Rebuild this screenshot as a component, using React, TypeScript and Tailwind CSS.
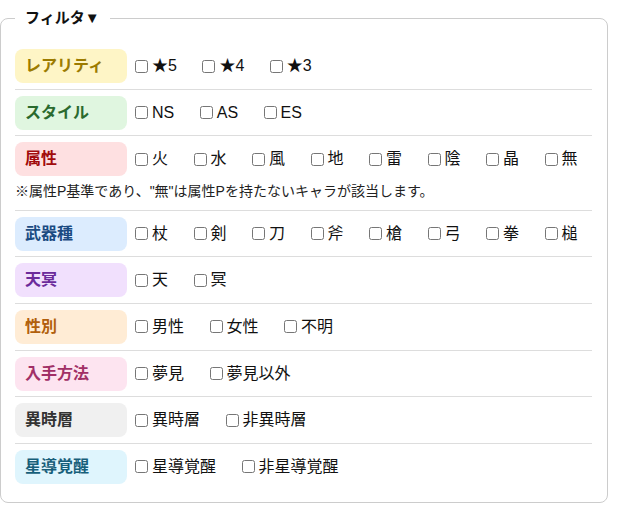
import React from 'react'

type Group = {
  title: string
  label: string
  options: string[]
  note?: string
}

const groups: Group[] = [
  { title: 'レアリティ', label: 'bg-[#fef5c6] text-[#9c7b00]', options: ['★5', '★4', '★3'] },
  { title: 'スタイル', label: 'bg-[#e0f6e0] text-[#2a6a2e]', options: ['NS', 'AS', 'ES'] },
  {
    title: '属性',
    label: 'bg-[#fee0e1] text-[#a10c0c]',
    options: ['火', '水', '風', '地', '雷', '陰', '晶', '無'],
    note: '※属性P基準であり、"無"は属性Pを持たないキャラが該当します。',
  },
  { title: '武器種', label: 'bg-[#dcecfe] text-[#1b4b82]', options: ['杖', '剣', '刀', '斧', '槍', '弓', '拳', '槌'] },
  { title: '天冥', label: 'bg-[#f1e0fd] text-[#6b2b9b]', options: ['天', '冥'] },
  { title: '性別', label: 'bg-[#ffecd5] text-[#b15f0c]', options: ['男性', '女性', '不明'] },
  { title: '入手方法', label: 'bg-[#fde4f0] text-[#a12f66]', options: ['夢見', '夢見以外'] },
  { title: '異時層', label: 'bg-[#f0f0f0] text-[#333333]', options: ['異時層', '非異時層'] },
  { title: '星導覚醒', label: 'bg-[#dff5fd] text-[#175f7a]', options: ['星導覚醒', '非星導覚醒'] },
]

function FilterRow({ group, last }: { group: Group; last: boolean }) {
  return (
    <div className={`pt-[6px] pb-[5.6px] ${last ? '' : 'border-b border-[#dddddd]'}`}>
      <div className="flex items-center">
        <div
          className={`w-[112px] h-[34px] shrink-0 rounded-lg flex items-center pl-[10px] text-[16px] font-bold ${group.label}`}
        >
          {group.title}
        </div>
        <div className="ml-[8px] flex flex-wrap items-center gap-x-[25.5px] text-[16px] text-[#111111]">
          {group.options.map((opt) => (
            <label key={opt} className="inline-flex items-center gap-[4px] cursor-pointer">
              <input type="checkbox" className="w-[13px] h-[13px]" />
              <span>{opt}</span>
            </label>
          ))}
        </div>
      </div>
      {group.note && (
        <p className="mt-[5px] pb-[3px] text-[14px] leading-[20px] text-[#222222]">{group.note}</p>
      )}
    </div>
  )
}

export default function App() {
  return (
    <div
      className="w-[620px] h-[508px] bg-white pt-[6px]"
      style={{ fontFamily: '"Liberation Sans", "Noto Sans CJK JP", sans-serif' }}
    >
      <fieldset className="w-[608px] border border-[#cccccc] rounded-lg pl-[14px] pr-[15px] pt-[13px] pb-[13px]">
        <legend className="px-[10px] text-[15px] leading-[24px] font-bold text-[#111111]">フィルタ▼</legend>
        {groups.map((g, i) => (
          <FilterRow key={g.title} group={g} last={i === groups.length - 1} />
        ))}
      </fieldset>
    </div>
  )
}
